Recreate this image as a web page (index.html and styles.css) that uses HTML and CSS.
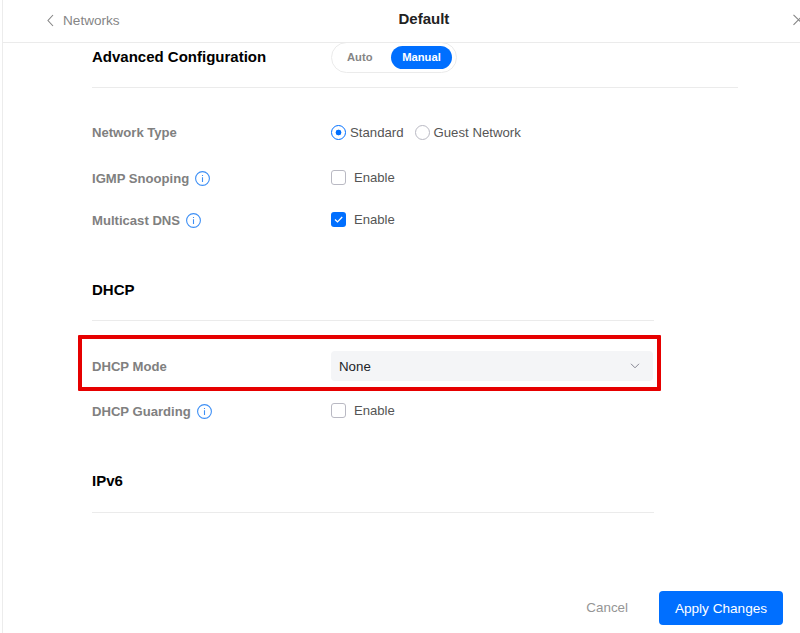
FILE: index.html
```html
<!DOCTYPE html>
<html lang="en">
<head>
<meta charset="utf-8">
<title>Default</title>
<link rel="stylesheet" href="styles.css">
</head>
<body>
<div class="panel">
  <header class="header">
    <a class="back"><svg width="7" height="13" viewBox="0 0 7 13"><path d="M6 1 1 6.5 6 12"/></svg><span class="back-text">Networks</span></a>
    <h1 class="title">Default</h1>
    <svg class="close" width="11" height="12" viewBox="0 0 11 12"><path d="M.5.8 10.5 10.8M10.5.8.5 10.8"/></svg>
  </header>
  <main class="content">
    <section class="row advanced">
      <h2 class="heading wide-heading">Advanced Configuration</h2>
      <div class="toggle"><span class="auto">Auto</span><span class="manual">Manual</span></div>
    </section>
    <div class="row type-row">
      <div class="label"><span>Network Type</span></div>
      <div class="field"><i class="radio on"></i><span class="radio-text">Standard</span><i class="radio"></i><span class="radio-text">Guest Network</span></div>
    </div>
    <div class="row igmp-row">
      <div class="label"><span>IGMP Snooping</span><svg class="info" viewBox="0 0 15 15"><circle cx="7.5" cy="7.5" r="6.9"/><path d="M7.5 6.3V11M7.5 4v1"/></svg></div>
      <div class="field"><i class="check"></i><span class="enable">Enable</span></div>
    </div>
    <div class="row mdns-row">
      <div class="label"><span>Multicast DNS</span><svg class="info" viewBox="0 0 15 15"><circle cx="7.5" cy="7.5" r="6.9"/><path d="M7.5 6.3V11M7.5 4v1"/></svg></div>
      <div class="field"><i class="check checked"><svg width="15" height="15" viewBox="0 0 15 15"><path d="m4 7.5 2.5 2.4L11.2 5"/></svg></i><span class="enable">Enable</span></div>
    </div>
    <section class="section dhcp-head"><h2 class="heading">DHCP</h2></section>
    <div class="row mode-row">
      <div class="label"><span>DHCP Mode</span></div>
      <div class="select"><span>None</span><svg width="10" height="6" viewBox="0 0 10 6"><path d="m1 .8 4 4 4-4"/></svg></div>
      <div class="highlight"></div>
    </div>
    <div class="row guard-row">
      <div class="label"><span>DHCP Guarding</span><svg class="info" viewBox="0 0 15 15"><circle cx="7.5" cy="7.5" r="6.9"/><path d="M7.5 6.3V11M7.5 4v1"/></svg></div>
      <div class="field"><i class="check"></i><span class="enable">Enable</span></div>
    </div>
    <section class="section ipv6-head"><h2 class="heading">IPv6</h2></section>
  </main>
  <footer class="footer"><span class="cancel">Cancel</span><button class="apply">Apply Changes</button></footer>
</div>
</body>
</html>
```
FILE: styles.css
```css
* { box-sizing: border-box; }
body {
  margin: 0;
  background: #fff;
  font-family: "Liberation Sans", Arial, sans-serif;
  font-size: 13.3px;
  color: #555;
  overflow: hidden;
}
svg { fill: none; flex: none; }
h1, h2 { margin: 0; }
span, h1, h2, button { white-space: nowrap; }
.panel {
  height: 633px;
  margin-left: 2px;
  border-left: 1px solid #ececec;
  display: flex;
  flex-direction: column;
}
.header {
  height: 43px;
  flex: none;
  display: grid;
  grid-template-columns: 1fr 60px 1fr;
  align-items: center;
  padding: 0 0 3px 44px;
  margin-right: -4px;
  border-bottom: 1px solid #ebebeb;
}
.back { display: flex; align-items: center; gap: 9px; color: #858585; padding-top: 1px; }
.back svg, .close { stroke: #858585; stroke-width: 1.1; }
.back-text { font-size: 13.6px; }
.title { font-size: 15px; color: #222; line-height: 18px; margin-left: 3px; margin-top: -2px; }
.close { justify-self: end; margin-top: 1px; }
.content { padding-left: 89px; flex: 1; }
.row { display: grid; grid-template-columns: 239px 1fr; align-items: center; position: relative; }
.heading { font-size: 15px; line-height: 18px; color: #000; }
.advanced { width: 646px; height: 45px; align-items: start; border-bottom: 1px solid #ebebeb; }
.wide-heading { padding-top: 5px; }
.toggle {
  width: 126px;
  height: 31px;
  margin-top: -1px;
  border: 1px solid #ebebeb;
  border-radius: 16px;
  display: flex;
  align-items: center;
  justify-content: space-between;
  padding: 0 4px 1px 15px;
  font-size: 11.2px;
  font-weight: 700;
}
.auto { color: #858585; }
.manual { width: 61px; height: 23px; line-height: 23px; border-radius: 12px; background: #006fff; color: #fff; text-align: center; }
.label { display: flex; align-items: center; gap: 6px; color: #808080; font-size: 13.1px; font-weight: 700; }
.info { width: 15px; height: 15px; stroke: #3d8ff5; stroke-width: 1.1; }
.field { display: flex; align-items: center; }
.radio { width: 15px; height: 15px; border: 1px solid #b9b9c3; border-radius: 50%; flex: none; }
.radio.on { border-color: #006fff; background: radial-gradient(circle, #006fff 2.6px, #fff 3.2px); }
.radio-text { margin: 0 11px 0 4px; font-size: 13.2px; }
.check { width: 15px; height: 15px; border: 1px solid #b9b9c3; border-radius: 3px; display: flex; flex: none; }
.checked { border: 0; background: #006fff; }
.checked svg { stroke: #fff; stroke-width: 1.3; }
.enable { margin-left: 8px; font-size: 13.1px; }
.type-row { height: 15px; margin-top: 37px; }
.igmp-row { height: 15px; margin-top: 30px; }
.mdns-row { height: 15px; margin-top: 27px; }
.igmp-row .label, .mdns-row .label, .guard-row .label { position: relative; top: 1px; }
.section { width: 562px; border-bottom: 1px solid #ebebeb; }
.dhcp-head { height: 40px; margin-top: 54px; }
.mode-row { height: 30px; margin-top: 30px; }
.mode-row .label { padding-top: 1px; }
.select {
  width: 322px;
  height: 30px;
  border-radius: 4px;
  background: #f4f5f7;
  color: #212327;
  display: flex;
  align-items: center;
  justify-content: space-between;
  padding: 0 13px 0 8px;
}
.select svg { stroke: #858591; stroke-width: 1; }
.highlight { position: absolute; left: -14px; top: -16px; width: 583px; height: 56px; border: 4px solid #e60000; border-radius: 1px; }
.guard-row { height: 15px; margin-top: 22px; }
.ipv6-head { height: 40px; margin-top: 55px; }
.ipv6-head .heading { margin-top: -1px; }
.ipv6-head { display: flex; }
.footer { height: 42px; flex: none; display: flex; align-items: flex-start; justify-content: flex-end; gap: 31px; padding-right: 17px; }
.cancel { color: #959595; line-height: 34px; font-size: 13.4px; }
.apply { width: 124px; height: 34px; border: 0; border-radius: 4px; padding: 0; background: #006fff; color: #fff; font: 13.6px "Liberation Sans", Arial, sans-serif; }
```
